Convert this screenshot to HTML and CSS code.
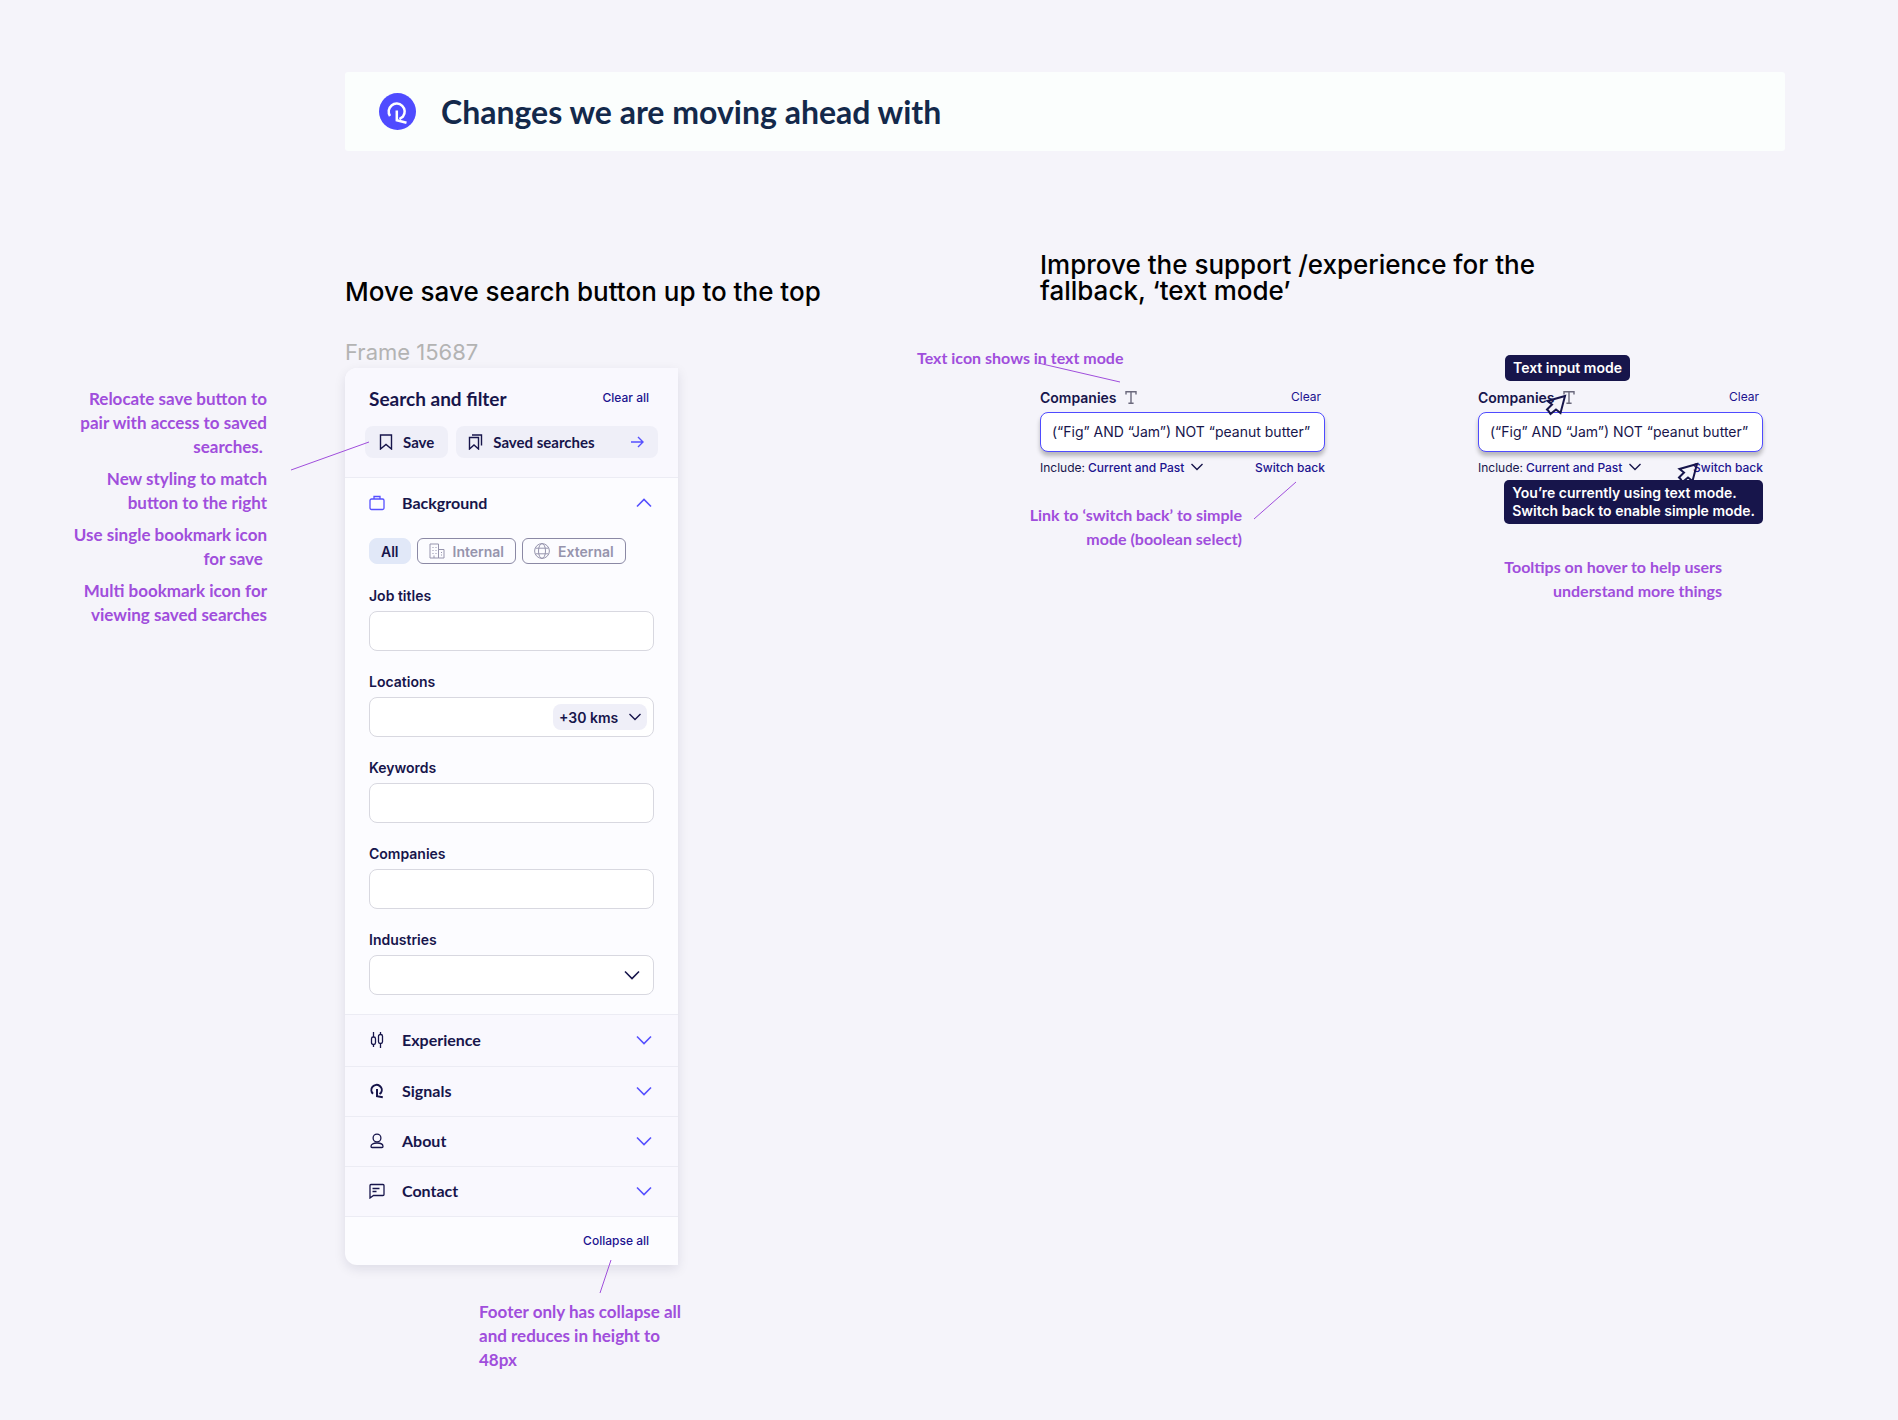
FILE: index.html
```html
<!DOCTYPE html>
<html lang="en">
<head>
    <meta charset="UTF-8">
    <meta name="viewport" content="width=device-width, initial-scale=1.0">
    <title>Changes we are moving ahead with</title>
    <link rel="stylesheet" href="styles.css">
</head>
<body>
    <!-- shared icons -->
    <svg class="sprite" aria-hidden="true">
        <symbol id="chevron" viewBox="0 0 16 10"><path d="M1 1.5 8 8.5l7-7"/></symbol>
        <symbol id="chevron-small" viewBox="0 0 12 8"><path d="M.5 1 6 6.5 11.5 1"/></symbol>
        <symbol id="text-icon" viewBox="0 0 12 13"><path d="M1 3.5V.8h10v2.7M6 .8v11.4M3.4 12.2h5.2"/></symbol>
        <symbol id="cursor" viewBox="0 0 22 22"><path d="M20 2 2.5 7 7 10.5l-5 5L3.5 17l2 3 5.5-4.5 4.5 3.5z"/></symbol>
    </svg>

    <header class="banner">
        <svg class="logo" viewBox="0 0 37 37" aria-hidden="true">
            <circle cx="18.5" cy="18.5" r="18.5"/>
            <path d="M11 23A8 8 0 1 1 24 23.5L20.5 26M17.8 17.5v9.7l9.700 2.500"/>
        </svg>
        <h1>Changes we are moving ahead with</h1>
    </header>

    <main class="board">
        <section class="save-search">
            <h2>Move save search button up to the top</h2>
            <p class="frame-name">Frame 15687</p>

            <div class="notes left-notes">
                <p>Relocate save button to<br>pair with access to saved<br>searches.&nbsp;</p>
                <p>New styling to match<br>button to the right</p>
                <p>Use single bookmark icon<br>for save&nbsp;</p>
                <p>Multi bookmark icon for<br>viewing saved searches</p>
                <svg class="leader leader-save" viewBox="0 0 78 28"><path d="M0 28 78 0"/></svg>
            </div>

            <form class="panel">
                <div class="panel-head">
                    <div class="title-row">
                        <h3>Search and filter</h3>
                        <button type="button" class="link">Clear all</button>
                    </div>
                    <div class="actions">
                        <button type="button" class="action">
                            <svg width="14" height="16" viewBox="0 0 14 16"><path d="M1.5 1h11v14L7 10.500 1.500 15z"/></svg>
                            Save
                        </button>
                        <button type="button" class="action wide">
                            <svg width="15" height="16" viewBox="0 0 15 16"><path d="M1.5 3.500h9v11.500L6 11l-4.500 4zM4 1h9.500v10.500"/></svg>
                            Saved searches
                            <svg class="arrow" width="14" height="12" viewBox="0 0 14 12"><path d="M1 6h12M8 1l5 5-5 5"/></svg>
                        </button>
                    </div>
                </div>

                <div class="open-section">
                    <button type="button" class="row open" aria-expanded="true">
                        <svg class="row-icon" viewBox="0 0 16 16"><rect x="1" y="4" width="14" height="10.5" rx="1.5"/><path d="M5 4V1.500h6V4"/></svg>
                        Background
                        <svg class="chevron"><use href="#chevron"/></svg>
                    </button>
                    <div class="chips">
                        <button type="button" class="chip selected">All</button>
                        <button type="button" class="chip">
                            <svg width="16" height="16" viewBox="0 0 16 16"><path d="M1 15V1h8.500v14zM9.500 6.500H15V15H9.500M3.500 4.500h1M6.500 4.500h1M3.500 7.500h1M6.500 7.500h1M3.500 10.500h1M6.500 10.500h1M12 9.500h1M12 12h1M5 12.500V15"/></svg>
                            Internal
                        </button>
                        <button type="button" class="chip">
                            <svg width="16" height="16" viewBox="0 0 16 16"><circle cx="8" cy="8" r="7.4"/><ellipse cx="8" cy="8" rx="3.5" ry="7.4"/><path d="M1.500 5.200h13M1.500 10.800h13"/></svg>
                            External
                        </button>
                    </div>

                    <div class="field">
                        <label for="jobs">Job titles</label>
                        <div class="box"><input type="text" id="jobs"></div>
                    </div>
                    <div class="field">
                        <label for="locations">Locations</label>
                        <div class="box">
                            <input type="text" id="locations">
                            <span class="distance">
                                <select aria-label="Distance"><option>+30 kms</option></select>
                                <svg class="small-chevron"><use href="#chevron-small"/></svg>
                            </span>
                        </div>
                    </div>
                    <div class="field">
                        <label for="keywords">Keywords</label>
                        <div class="box"><input type="text" id="keywords"></div>
                    </div>
                    <div class="field">
                        <label for="companies">Companies</label>
                        <div class="box"><input type="text" id="companies"></div>
                    </div>
                    <div class="field">
                        <label for="industries">Industries</label>
                        <div class="box industry">
                            <select id="industries"><option></option></select>
                            <svg class="chevron"><use href="#chevron"/></svg>
                        </div>
                    </div>
                </div>

                <button type="button" class="row tall">
                    <svg class="row-icon" viewBox="0 0 16 16"><path d="M4.500 0v5M4.500 12.500V15M11.500 0v2.500M11.500 11.500V16"/><rect x="2.5" y="5" width="4" height="7.5" rx="1.8"/><rect x="9.5" y="2.5" width="4" height="9" rx="1.8"/></svg>
                    Experience
                    <svg class="chevron"><use href="#chevron"/></svg>
                </button>
                <button type="button" class="row">
                    <svg class="row-icon signal" viewBox="0 0 16 16"><path d="M4 10.800A5.200 5.200 0 1 1 12 9.800L10.500 11M8 6v7.200l5.800 1"/></svg>
                    Signals
                    <svg class="chevron"><use href="#chevron"/></svg>
                </button>
                <button type="button" class="row">
                    <svg class="row-icon" viewBox="0 0 16 16"><circle cx="8" cy="5" r="3.9"/><path d="M8 10C4 10 2 11.500 2 13.500q0 1 1 1h10q1 0 1-1c0-2-2-3.500-6-3.500z"/></svg>
                    About
                    <svg class="chevron"><use href="#chevron"/></svg>
                </button>
                <button type="button" class="row">
                    <svg class="row-icon" viewBox="0 0 16 16"><path d="M1 15V2.500Q1 1.500 2 1.500h12q1 0 1 1v9q0 1-1 1H4.500zM3.500 5.500h7M3.500 8.500h4"/></svg>
                    Contact
                    <svg class="chevron"><use href="#chevron"/></svg>
                </button>

                <div class="panel-foot">
                    <button type="button" class="link">Collapse all</button>
                </div>
            </form>

            <div class="notes foot-notes">
                <p>Footer only has collapse all<br>and reduces in height to<br>48px</p>
                <svg class="leader leader-foot" viewBox="0 0 11 33"><path d="M11 0 0 33"/></svg>
            </div>
        </section>

        <section class="text-mode">
            <h2>Improve the support /experience for the<br>fallback, ‘text mode’</h2>
            <div class="examples">
                <article class="example first">
                    <div class="notes">
                        <p>Text icon shows in text mode</p>
                        <svg class="leader leader-icon" viewBox="0 0 82 19"><path d="M0 0 82 19"/></svg>
                    </div>
                    <div class="query">
                        <div class="query-head">
                            <label for="query1">Companies</label>
                            <svg class="text-icon"><use href="#text-icon"/></svg>
                            <button type="button" class="link light">Clear</button>
                        </div>
                        <input type="text" id="query1" class="query-input" value="(“Fig” AND “Jam”) NOT “peanut butter”">
                        <div class="query-foot">
                            <label for="include1">Include:</label>
                            <select id="include1"><option>Current and Past</option></select>
                            <svg class="small-chevron"><use href="#chevron-small"/></svg>
                            <a href="#" class="switch">Switch back</a>
                        </div>
                    </div>
                    <div class="notes link-note">
                        <p>Link to ‘switch back’ to simple<br>mode (boolean select)</p>
                        <svg class="leader leader-link" viewBox="0 0 42 37"><path d="M0 37 42 0"/></svg>
                    </div>
                </article>

                <article class="example second">
                    <div class="query">
                        <div class="query-head">
                            <label for="query2">Companies</label>
                            <svg class="text-icon"><use href="#text-icon"/></svg>
                            <button type="button" class="link light">Clear</button>
                        </div>
                        <input type="text" id="query2" class="query-input" value="(“Fig” AND “Jam”) NOT “peanut butter”">
                        <div class="query-foot">
                            <label for="include2">Include:</label>
                            <select id="include2"><option>Current and Past</option></select>
                            <svg class="small-chevron"><use href="#chevron-small"/></svg>
                            <a href="#" class="switch">Switch back</a>
                        </div>
                        <svg class="cursor cursor-icon"><use href="#cursor"/></svg>
                        <svg class="cursor cursor-switch"><use href="#cursor"/></svg>
                        <div class="tooltip tip-icon" role="tooltip">Text input mode</div>
                        <div class="tooltip tip-switch" role="tooltip">You’re currently using text mode.<br>Switch back to enable simple mode.</div>
                    </div>
                    <div class="notes tip-note">
                        <p>Tooltips on hover to help users<br>understand more things</p>
                    </div>
                </article>
            </div>
        </section>
    </main>
</body>
</html>
```
FILE: styles.css
```css
*{
    box-sizing:border-box;
}
body{
    margin:0;
    padding-bottom:48px;
    background-color:#f5f4fa;
    color:#17154b;
    font-family:Inter, sans-serif;
}
h1, h2, h3, p{
    margin:0;
}
button, input, select{
    font-family:inherit;
    color:inherit;
    border:0;
    background:none;
    padding:0;
    margin:0;
}
button, select{
    cursor:pointer;
}
select{
    appearance:none;
}
svg{
    flex:none;
    fill:none;
    stroke:currentColor;
}
.sprite{
    position:absolute;
    width:0;
    height:0;
}

/* banner */
.banner{
    display:flex;
    align-items:center;
    gap:25px;
    margin:72px 113px 0 345px;
    padding:20px 34px;
    background-color:#fbfefd;
    border-radius:3px;
}
.banner h1{
    font:bold 32px/39px Lato, sans-serif;
    color:#13294b;
}
.logo{
    width:37px;
    height:37px;
    stroke:#fff;
    stroke-width:2.5;
}
.logo circle{
    fill:#4f4bff;
    stroke:none;
}

/* board */
.board{
    display:flex;
    align-items:flex-start;
    padding:0 135px 0 67px;
}
h2{
    font-size:26px;
    line-height:26px;
    font-weight:500;
    color:#000;
    white-space:nowrap;
}
.save-search{
    display:grid;
    grid-template-columns:200px 333px;
    column-gap:78px;
    padding-top:128px;
}
.save-search h2, .frame-name, .panel, .foot-notes{
    grid-column:2;
}
.frame-name{
    margin-top:34px;
    font-size:22px;
    line-height:26px;
    color:#b3b3b3;
}
.notes{
    position:relative;
    font:bold 16px/24px Lato, sans-serif;
    color:#a04edc;
    white-space:nowrap;
}
.notes p + p{
    margin-top:8px;
}
.save-search .notes{
    font-size:17px;
}
.left-notes{
    grid-column:1;
    grid-row:3;
    padding-top:22px;
    text-align:right;
}
.foot-notes{
    margin-top:35px;
    padding-left:134px;
}

/* thin lines from a note to the thing it is about */
.leader{
    position:absolute;
    z-index:1;
    overflow:visible;
}
.leader-save{
    width:78px;
    height:28px;
    left:224px;
    top:77px;
}
.leader-foot{
    width:11px;
    height:33px;
    left:255px;
    top:-40px;
}
.leader-icon{
    width:82px;
    height:19px;
    left:121px;
    top:17px;
}
.leader-link{
    width:42px;
    height:37px;
    right:-54px;
    top:-21px;
}

/* filter panel */
.panel{
    grid-row:3;
    margin-top:3px;
    background-color:#fcfcff;
    border-radius:12px 0 0 12px;
    box-shadow:0 4px 12px rgba(20,20,60,.1);
    overflow:hidden;
}
.panel-head{
    padding:21px 20px 19px;
    background-color:#f9f8fe;
    border-bottom:1px solid #ececf4;
}
.title-row{
    display:flex;
    align-items:flex-start;
    justify-content:space-between;
    padding:0 9px 0 4px;
}
.title-row h3{
    font:bold 19px/20px Lato, sans-serif;
}
.link{
    font-size:12px;
    line-height:18px;
    font-weight:500;
    color:#1c138f;
}
.light{
    font-weight:400;
}
.actions{
    display:flex;
    gap:8px;
    margin-top:17px;
}
.action{
    display:flex;
    align-items:center;
    gap:10px;
    height:32px;
    padding:0 14px;
    border-radius:8px;
    background-color:#efeff8;
    font:bold 15px/20px Lato, sans-serif;
}
.action svg{
    stroke-width:1.4;
}
.wide{
    flex:1;
    padding-left:12px;
}
.arrow{
    margin-left:auto;
    color:#5650ff;
}
.row{
    display:flex;
    align-items:center;
    gap:17px;
    width:100%;
    height:50px;
    padding:0 26px 2px 24px;
    background-color:#f9f8fe;
    border-bottom:1px solid #ececf4;
    font:bold 16px/24px Lato, sans-serif;
}
.row .chevron{
    color:#5650ff;
    margin-left:auto;
}
.tall{
    height:52px;
}
.row-icon{
    width:16px;
    height:16px;
    stroke-width:1.3;
}
.signal{
    stroke-width:2;
}
.open{
    background:none;
    border:0;
    height:51px;
}
.open .row-icon{
    color:#5650ff;
}
.open .chevron{
    transform:rotate(180deg);
}
.chevron{
    width:16px;
    height:10px;
    stroke-width:1.6;
}
.small-chevron{
    width:12px;
    height:8px;
    stroke-width:1.4;
    pointer-events:none;
}
.open-section{
    padding-bottom:19px;
    border-bottom:1px solid #ececf4;
}
.chips{
    display:flex;
    gap:6px;
    padding:9px 24px 1px;
}
.chip{
    display:flex;
    align-items:center;
    gap:8px;
    height:26px;
    padding:0 11px;
    border:1px solid #8b89a5;
    border-radius:6px;
    font-size:14px;
    font-weight:600;
    color:#9694ad;
}
.selected{
    border-color:#e1e8f8;
    border-radius:8px;
    background-color:#e1e8f8;
    color:#17154b;
}
.field{
    padding:22px 24px 0;
}
.field label{
    display:block;
    margin-bottom:6px;
    font-size:14px;
    line-height:18px;
    font-weight:600;
}
.box{
    display:flex;
    align-items:center;
    height:40px;
    padding:0 6px 0 12px;
    background-color:#fff;
    border:1px solid #d8d8e0;
    border-radius:8px;
}
.box input, .box > select{
    flex:1;
    min-width:0;
    height:100%;
    font-size:14px;
}
.industry{
    padding-right:13px;
}
.distance{
    display:flex;
    align-items:center;
    gap:10px;
    height:26px;
    padding:0 6px;
    background-color:#efeff8;
    border-radius:8px;
}
.distance select{
    font-size:14px;
    font-weight:600;
}
.panel-foot{
    display:flex;
    justify-content:flex-end;
    padding:15px 29px;
}

/* text mode */
.text-mode{
    flex:1;
    margin-left:239px;
    padding-top:101px;
}
.text-mode h2{
    margin-left:123px;
}
.examples{
    display:flex;
    justify-content:space-between;
    margin-top:42px;
}
.first .query{
    margin:18px 0 0 123px;
}
.second .query{
    margin-top:42px;
}
.query{
    position:relative;
    width:285px;
}
.query-head, .query-foot{
    display:flex;
    align-items:center;
    height:18px;
}
.query-head label{
    font-size:14px;
    font-weight:600;
}
.query-head .link{
    margin-left:auto;
    margin-right:4px;
}
.text-icon{
    width:12px;
    height:13px;
    margin-left:8px;
    color:#6b697c;
    stroke-width:1.4;
}
.query-input{
    display:block;
    width:100%;
    height:40px;
    margin:6px 0;
    padding:0 11px 1px;
    background-color:#fff;
    border:1px solid #4f4bff;
    border-radius:8px;
    box-shadow:0 4px 4px rgba(0,0,0,.25);
    font-size:14px;
}
.query-foot{
    font-size:12px;
}
.query-foot select{
    margin:0 6px 0 3px;
    font-size:12px;
    font-weight:500;
    color:#1c138f;
}
.switch{
    margin-left:auto;
    font-weight:500;
    color:#1c138f;
    text-decoration:none;
}
.link-note{
    margin:27px 83px 0 0;
    text-align:right;
}
.tip-note{
    margin:79px 41px 0 0;
    text-align:right;
}
.tooltip{
    position:absolute;
    padding:4px 8px;
    border-radius:5px;
    background-color:#17154b;
    color:#fff;
    font-size:14px;
    line-height:18px;
    font-weight:600;
    white-space:nowrap;
}
.tip-icon{
    left:27px;
    top:-33px;
}
.tip-switch{
    right:0;
    top:92px;
}
.cursor{
    position:absolute;
    width:22px;
    height:22px;
    stroke-width:2;
}
.cursor-icon{
    left:67px;
    top:6px;
}
.cursor-switch{
    left:199px;
    top:74px;
}
```
